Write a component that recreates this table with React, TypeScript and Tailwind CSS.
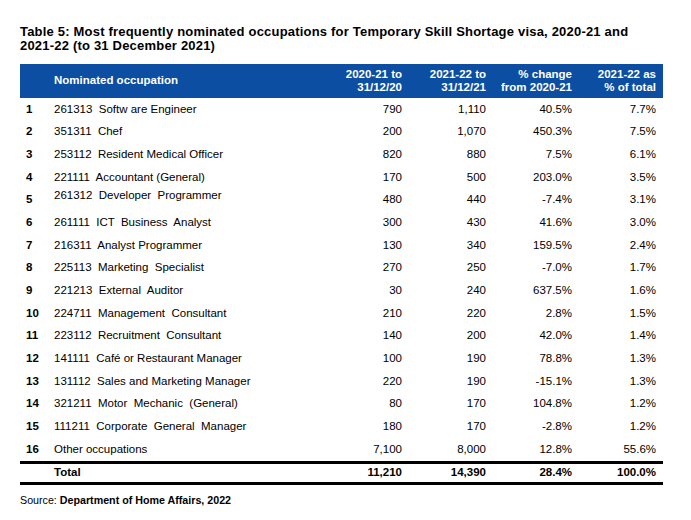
import React from 'react';

type Row = {
  n: number;
  occ: string;
  a: string;
  b: string;
  chg: string;
  pct: string;
  raise?: boolean;
};

const ROWS: Row[] = [
  { n: 1, occ: '261313  Softw are Engineer', a: '790', b: '1,110', chg: '40.5%', pct: '7.7%' },
  { n: 2, occ: '351311  Chef', a: '200', b: '1,070', chg: '450.3%', pct: '7.5%' },
  { n: 3, occ: '253112  Resident Medical Officer', a: '820', b: '880', chg: '7.5%', pct: '6.1%' },
  { n: 4, occ: '221111  Accountant (General)', a: '170', b: '500', chg: '203.0%', pct: '3.5%' },
  { n: 5, occ: '261312  Developer  Programmer', a: '480', b: '440', chg: '-7.4%', pct: '3.1%', raise: true },
  { n: 6, occ: '261111  ICT  Business  Analyst', a: '300', b: '430', chg: '41.6%', pct: '3.0%' },
  { n: 7, occ: '216311  Analyst Programmer', a: '130', b: '340', chg: '159.5%', pct: '2.4%' },
  { n: 8, occ: '225113  Marketing  Specialist', a: '270', b: '250', chg: '-7.0%', pct: '1.7%' },
  { n: 9, occ: '221213  External  Auditor', a: '30', b: '240', chg: '637.5%', pct: '1.6%' },
  { n: 10, occ: '224711  Management  Consultant', a: '210', b: '220', chg: '2.8%', pct: '1.5%' },
  { n: 11, occ: '223112  Recruitment  Consultant', a: '140', b: '200', chg: '42.0%', pct: '1.4%' },
  { n: 12, occ: '141111  Café or Restaurant Manager', a: '100', b: '190', chg: '78.8%', pct: '1.3%' },
  { n: 13, occ: '131112  Sales and Marketing Manager', a: '220', b: '190', chg: '-15.1%', pct: '1.3%' },
  { n: 14, occ: '321211  Motor  Mechanic  (General)', a: '80', b: '170', chg: '104.8%', pct: '1.2%' },
  { n: 15, occ: '111211  Corporate  General  Manager', a: '180', b: '170', chg: '-2.8%', pct: '1.2%' },
  { n: 16, occ: 'Other occupations', a: '7,100', b: '8,000', chg: '12.8%', pct: '55.6%' },
];

const GRID = 'grid grid-cols-[34px_268px_80px_84px_86px_84px_7px]';

export default function App() {
  return (
    <div className="w-[691px] h-[520px] bg-white text-black font-['Liberation_Sans',Arial,sans-serif]">
      <div className="pl-5 pt-[25px]">
        <h1 className="text-[13px] leading-[14px] font-bold tracking-[0.2px] w-[650px]">
          Table 5: Most frequently nominated occupations for Temporary Skill Shortage visa, 2020-21 and
          <br />
          2021-22 (to 31 December 2021)
        </h1>

        <div className="mt-[11px] w-[643px]">
          <div className={`${GRID} h-[34px] bg-[#0b4ea2] text-white font-bold text-[11.5px] leading-[13.5px] items-center`}>
            <div />
            <div>Nominated occupation</div>
            <div className="text-right">2020-21 to<br />31/12/20</div>
            <div className="text-right">2021-22 to<br />31/12/21</div>
            <div className="text-right">% change<br />from 2020-21</div>
            <div className="text-right">2021-22 as<br />% of total</div>
            <div />
          </div>

          {ROWS.map(r => (
            <div key={r.n} className={`${GRID} h-[22.67px] items-center text-[11.5px] leading-[13px]`}>
              <div className="pl-1.5 font-bold">{r.n}</div>
              <div className={`whitespace-pre ${r.raise ? 'pb-2' : ''}`}>{r.occ}</div>
              <div className="text-right">{r.a}</div>
              <div className="text-right">{r.b}</div>
              <div className="text-right">{r.chg}</div>
              <div className="text-right">{r.pct}</div>
              <div />
            </div>
          ))}

          <div className={`${GRID} h-[24px] items-center border-y-[3px] border-black font-bold text-[11.5px] leading-[13px]`}>
            <div />
            <div>Total</div>
            <div className="text-right">11,210</div>
            <div className="text-right">14,390</div>
            <div className="text-right">28.4%</div>
            <div className="text-right">100.0%</div>
            <div />
          </div>
        </div>

        <p className="mt-[9px] text-[10.7px] leading-[12px]">
          Source: <span className="font-bold">Department of Home Affairs, 2022</span>
        </p>
      </div>
    </div>
  );
}
